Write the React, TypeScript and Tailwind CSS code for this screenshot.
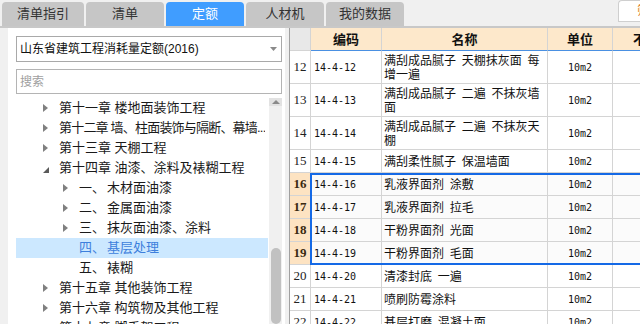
import React from 'react';

const TABS = [
  { label: '清单指引', w: 'w-[82px]' },
  { label: '清单', w: 'w-[78px]' },
  { label: '定额', w: 'w-[78px]', active: true },
  { label: '人材机', w: 'w-[78px]' },
  { label: '我的数据', w: 'w-[78px]' },
];

type TreeItem = { level: 1 | 2; label?: string; text: string; state: 'closed' | 'open' | 'leaf'; selected?: boolean; tight?: boolean };

const TREE: TreeItem[] = [
  { level: 1, text: '第十一章 楼地面装饰工程', state: 'closed' },
  { level: 1, text: '第十二章 墙、柱面装饰与隔断、幕墙...', state: 'closed', tight: true },
  { level: 1, text: '第十三章 天棚工程', state: 'closed' },
  { level: 1, text: '第十四章 油漆、涂料及裱糊工程', state: 'open' },
  { level: 2, label: '一、', text: '木材面油漆', state: 'closed' },
  { level: 2, label: '二、', text: '金属面油漆', state: 'closed' },
  { level: 2, label: '三、', text: '抹灰面油漆、涂料', state: 'closed' },
  { level: 2, label: '四、', text: '基层处理', state: 'leaf', selected: true },
  { level: 2, label: '五、', text: '裱糊', state: 'leaf' },
  { level: 1, text: '第十五章 其他装饰工程', state: 'closed' },
  { level: 1, text: '第十六章 构筑物及其他工程', state: 'closed' },
  { level: 1, text: '第十七章 脚手架工程', state: 'closed' },
];

type Row = { n: number; code: string; name: string[]; sel?: boolean };

const ROWS: Row[] = [
  { n: 12, code: '14-4-12', name: ['满刮成品腻子 天棚抹灰面 每', '增一遍'] },
  { n: 13, code: '14-4-13', name: ['满刮成品腻子 二遍 不抹灰墙', '面'] },
  { n: 14, code: '14-4-14', name: ['满刮成品腻子 二遍 不抹灰天', '棚'] },
  { n: 15, code: '14-4-15', name: ['满刮柔性腻子 保温墙面'] },
  { n: 16, code: '14-4-16', name: ['乳液界面剂 涂敷'], sel: true },
  { n: 17, code: '14-4-17', name: ['乳液界面剂 拉毛'], sel: true },
  { n: 18, code: '14-4-18', name: ['干粉界面剂 光面'], sel: true },
  { n: 19, code: '14-4-19', name: ['干粉界面剂 毛面'], sel: true },
  { n: 20, code: '14-4-20', name: ['清漆封底 一遍'] },
  { n: 21, code: '14-4-21', name: ['喷刷防霉涂料'] },
  { n: 22, code: '14-4-22', name: ['基层打磨 混凝土面'] },
];

function Arrow({ state }: { state: TreeItem['state'] }) {
  if (state === 'closed')
    return (
      <svg width="5" height="8" viewBox="0 0 5 8">
        <polygon points="0,0 5,4 0,8" fill="#808080" />
      </svg>
    );
  if (state === 'open')
    return (
      <svg width="6" height="6" viewBox="0 0 6 6" className="mt-[4px]">
        <polygon points="6,0 6,6 0,6" fill="#5a5a5a" />
      </svg>
    );
  return null;
}

export default function App() {
  const cell = 'border-r border-b border-[#d4d4d4] flex items-center';
  return (
    <div className="w-[640px] h-[324px] overflow-hidden bg-[#f0f0f0] font-['Liberation_Sans','Noto_Sans_CJK_SC',sans-serif] text-[#111]">
      {/* tabs */}
      <div className="h-[28px] flex items-end gap-[2px] pl-[2px] border-b-2 border-[#c8c8c8]">
        {TABS.map((t) => (
          <div
            key={t.label}
            className={`${t.w} h-[24px] rounded-t-[4px] flex items-center justify-center text-[13px] ${
              t.active ? 'bg-[#409dff] text-white' : 'bg-[#c6c6c6] text-[#333]'
            }`}
          >
            {t.label}
          </div>
        ))}
        <div className="ml-auto self-start h-[22px] w-[22px] bg-white border border-r-0 border-[#cfcfcf] rounded-tl-[4px] text-[12px] text-[#e07a1a] pl-[18px] leading-[20px] overflow-hidden whitespace-nowrap">
          筛选
        </div>
      </div>

      <div className="flex h-[296px]">
        {/* left panel */}
        <div className="w-[289px] flex pl-[8px]">
          <div className="w-[277px] h-full bg-white pt-[8px] pl-[8px] pr-[3px] flex flex-col">
            <div className="h-[26px] border border-[#a9a9a9] flex items-center pl-[3px] pr-[4px] text-[12px] text-[#111]">
              <span className="flex-1">山东省建筑工程消耗量定额(2016)</span>
              <svg width="7" height="4" viewBox="0 0 7 4">
                <polygon points="0,0 7,0 3.5,4" fill="#8a8a8a" />
              </svg>
            </div>
            <div className="mt-[7px] h-[25px] border border-[#b4b4b4] flex items-center pl-[3px] text-[12px] text-[#a0a0a0]">
              搜索
            </div>
            <div className="mt-[4px] flex flex-1 min-h-0">
              <div className="w-[253px]">
                {TREE.map((it, i) => (
                  <div
                    key={i}
                    className={`h-[20px] flex items-center text-[13px] whitespace-nowrap ${
                      it.level === 1 ? 'pl-[27px]' : 'pl-[47px]'
                    } ${it.selected ? 'bg-[#cce8ff] text-[#3d7fdc]' : 'text-[#1a1a1a]'}`}
                  >
                    <span className="w-[16px] flex items-center shrink-0">
                      <Arrow state={it.state} />
                    </span>
                    {it.label && <span className="w-[28px] shrink-0">{it.label}</span>}
                    <span className={`overflow-hidden ${it.tight ? 'tracking-[-0.8px]' : ''}`}>{it.text}</span>
                  </div>
                ))}
              </div>
              <div className="ml-[1px] w-[13px] bg-[#f0f0f0] flex flex-col">
                <div className="h-[12px] bg-[#e2e2e2] flex items-center justify-center">
                  <svg width="8" height="4" viewBox="0 0 8 4">
                    <polygon points="0,4 8,4 4,0" fill="#8a8a8a" />
                  </svg>
                </div>
                <div className="mt-[142px] mx-auto w-[10px] h-[120px] rounded-full bg-[#c1c1c1]" />
              </div>
            </div>
          </div>
        </div>

        {/* table */}
        <div className="flex-1 relative overflow-hidden bg-white border-l border-[#a0a0a0]">
          <div className="grid grid-cols-[21px_71px_166px_65px_80px] text-[12px]">
            <div className="h-[23px] bg-[#e8e8e8] border-r border-b border-[#d4d4d4]" />
            {['编码', '名称', '单位', '不含税'].map((h) => (
              <div
                key={h}
                className="h-[23px] bg-[#fde8cb] border-r border-[#d4d4d4] border-b border-b-[#4a90e2] flex items-center justify-center text-[13px] font-bold font-['Noto_Sans_CJK_SC',sans-serif] whitespace-nowrap overflow-hidden"
              >
                {h}
              </div>
            ))}
            {ROWS.map((r) => {
              const h = r.name.length > 1 ? 'h-[33px]' : 'h-[23px]';
              const bg = r.sel ? 'bg-[#fbfbfb]' : 'bg-white';
              return (
                <React.Fragment key={r.n}>
                  <div
                    className={`${cell} ${h} justify-center text-[13px] font-['Liberation_Serif',serif] ${
                      r.sel ? 'bg-[#fde3c2] font-bold text-[#3a2a10]' : 'bg-white text-[#222]'
                    }`}
                  >
                    {r.n}
                  </div>
                  <div className={`${cell} ${h} ${bg} pl-[3px] text-[10px] font-['DejaVu_Sans_Mono',monospace]`}>
                    {r.code}
                  </div>
                  <div className={`${cell} ${h} ${bg} pl-[2px] font-['Noto_Sans_CJK_SC',sans-serif] leading-[14px] [word-spacing:3px]`}>
                    <div>
                      {r.name.map((l, i) => (
                        <div key={i} className="whitespace-pre">
                          {l}
                        </div>
                      ))}
                    </div>
                  </div>
                  <div className={`${cell} ${h} ${bg} justify-center text-[10px] font-['DejaVu_Sans_Mono',monospace]`}>
                    10m2
                  </div>
                  <div className={`${cell} ${h} ${bg}`} />
                </React.Fragment>
              );
            })}
          </div>
          {/* selection outline */}
          <div className="absolute left-[20px] top-[145px] right-[-4px] h-[92px] border-2 border-[#1469e6] pointer-events-none" />
        </div>
      </div>
    </div>
  );
}
